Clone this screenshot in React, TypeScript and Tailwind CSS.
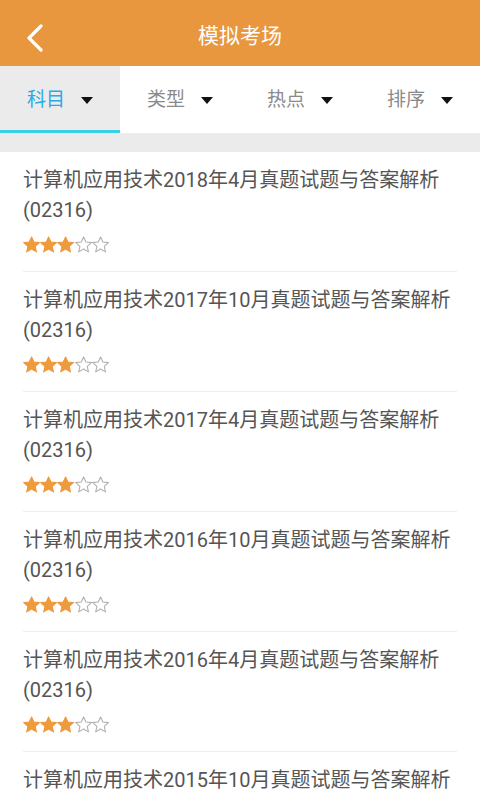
import React from "react";

const items = [
  "计算机应用技术2018年4月真题试题与答案解析",
  "计算机应用技术2017年10月真题试题与答案解析",
  "计算机应用技术2017年4月真题试题与答案解析",
  "计算机应用技术2016年10月真题试题与答案解析",
  "计算机应用技术2016年4月真题试题与答案解析",
  "计算机应用技术2015年10月真题试题与答案解析",
];

const font = { fontFamily: '"Roboto", "Noto Sans CJK SC", sans-serif' };

function Star({ filled }: { filled: boolean }) {
  return (
    <svg width="17.2" height="17" viewBox="0 0 24 23">
      <path
        d="M12 1l3.2 7.1 7.8.8-5.9 5.2 1.7 7.7L12 17.8l-6.8 4 1.7-7.7L1 8.9l7.8-.8z"
        fill={filled ? "#ef9a3b" : "#ffffff"}
        stroke={filled ? "#ef9a3b" : "#b0b0b0"}
        strokeWidth="1.5"
        strokeLinejoin="round"
      />
    </svg>
  );
}

function Tab({ label, active }: { label: string; active?: boolean }) {
  return (
    <div
      className={`flex-1 flex items-center justify-center gap-[16px] pt-[4px] border-b-[3px] ${
        active ? "bg-[#ebebeb] border-[#3ad0e6]" : "bg-white border-transparent"
      }`}
    >
      <span className={`text-[19px] ${active ? "text-[#2aa9e6]" : "text-[#8a8a8a]"}`}>{label}</span>
      <svg width="12" height="7" viewBox="0 0 12 7">
        <path d="M0 0h12L6 7z" fill="#111" />
      </svg>
    </div>
  );
}

export default function App() {
  return (
    <div className="w-[480px] h-[800px] overflow-hidden bg-white flex flex-col" style={font}>
      <div className="h-[66px] shrink-0 bg-[#e8973e] relative flex items-center justify-center pt-[8px]">
        <svg className="absolute left-[26px] top-[24px]" width="18" height="28" viewBox="0 0 18 28">
          <path d="M15 2L3 14l12 12" fill="none" stroke="#fff" strokeWidth="3.2" strokeLinecap="round" strokeLinejoin="round" />
        </svg>
        <span className="text-white text-[21px]">模拟考场</span>
      </div>
      <div className="h-[67px] shrink-0 flex">
        <Tab label="科目" active />
        <Tab label="类型" />
        <Tab label="热点" />
        <Tab label="排序" />
      </div>
      <div className="h-[19px] shrink-0 bg-[#ebebeb]" />
      <div className="flex flex-col">
        {items.map((t, i) => (
          <div key={i} className="mx-[23px] border-b border-[#eeeeee] pt-[13px] pb-[18px]">
            <div className="text-[20px] leading-[30px] text-[#555555] whitespace-nowrap">{t}</div>
            <div className="text-[20px] leading-[30px] text-[#555555]">(02316)</div>
            <div className="flex mt-[11px]">
              {[0, 1, 2, 3, 4].map((s) => (
                <Star key={s} filled={s < 3} />
              ))}
            </div>
          </div>
        ))}
      </div>
    </div>
  );
}
